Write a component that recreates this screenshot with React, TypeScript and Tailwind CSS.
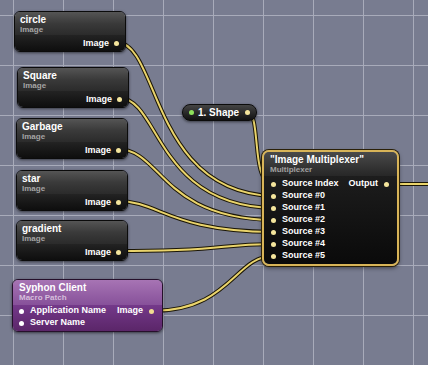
const wires = [
  // circle -> Source #0
  "M116 42 C160 42 150 192 273 196",
  // Square -> Source #1
  "M119 98 C160 98 155 205 273 208",
  // Garbage -> Source #2
  "M117 149 C162 149 160 218 273 220",
  // star -> Source #3
  "M117 201 C160 201 168 231 273 232",
  // gradient -> Source #4
  "M117 251 C230 251 215 244 273 244",
  // Syphon Client -> Source #5
  "M152 311 C230 311 235 256 273 256",
  // 1. Shape -> Source Index
  "M247 112 C262 112 250 184 273 184",
  // Output
  "M387 184 L440 184",
];

function Wires() {
  return (
    <svg className="absolute inset-0" width="428" height="365" viewBox="0 0 428 365">
      {wires.map((d, i) => (
        <g key={i} fill="none" strokeLinecap="round">
          <path d={d} stroke="#1b1606" strokeWidth="4" />
          <path d={d} stroke="#ead46c" strokeWidth="2" />
        </g>
      ))}
    </svg>
  );
}

function Dot({ color }: { color: string }) {
  return <span className={`block w-[5px] h-[5px] rounded-full shrink-0 ${color}`} />;
}

function ImageNode({ title, pos }: { title: string; pos: string }) {
  return (
    <div className={`absolute w-[112px] h-[41px] rounded-[6px] border border-[#0b0b0b] overflow-hidden shadow-[0_1px_3px_rgba(0,0,0,0.55)] ${pos}`}>
      <div className="h-[23px] px-[5px] pt-[2px] bg-linear-to-b from-[#555555] via-[#3a3a3a] to-[#2b2b2b]">
        <div className="text-[10px] leading-[11px] font-bold text-white">{title}</div>
        <div className="text-[8px] leading-[9px] font-bold text-[#a4a4a4]">Image</div>
      </div>
      <div className="h-[16px] flex items-center justify-end gap-[5px] pr-[6px] bg-linear-to-b from-[#232323] to-[#0e0e0e]">
        <span className="text-[9px] leading-[10px] font-bold text-white">Image</span>
        <Dot color="bg-[#f4e59c]" />
      </div>
    </div>
  );
}

const sources = ["Source #0", "Source #1", "Source #2", "Source #3", "Source #4", "Source #5"];

export default function App() {
  return (
    <div className="relative w-[428px] h-[365px] overflow-hidden bg-[#787c90] bg-[linear-gradient(to_right,#a8abba_1px,transparent_1px),linear-gradient(to_bottom,#a8abba_1px,transparent_1px)] bg-[size:50px_50px] bg-[position:13px_15px] font-['Liberation_Sans',Arial,sans-serif]">
      <Wires />

      <ImageNode title="circle" pos="left-[14px] top-[11px]" />
      <ImageNode title="Square" pos="left-[17px] top-[67px]" />
      <ImageNode title="Garbage" pos="left-[16px] top-[118px]" />
      <ImageNode title="star" pos="left-[16px] top-[170px]" />
      <ImageNode title="gradient" pos="left-[16px] top-[220px]" />

      {/* Syphon macro patch */}
      <div className="absolute left-[12px] top-[279px] w-[151px] h-[53px] rounded-[6px] border border-[#25102b] overflow-hidden shadow-[0_1px_3px_rgba(0,0,0,0.55)]">
        <div className="h-[25px] px-[6px] pt-[2px] bg-linear-to-b from-[#a774b4] to-[#87519a]">
          <div className="text-[10px] leading-[11px] font-bold text-white">Syphon Client</div>
          <div className="text-[8px] leading-[9px] font-bold text-[#d6bfdc]">Macro Patch</div>
        </div>
        <div className="h-[26px] flex flex-col pl-[6px] pr-[8px] bg-linear-to-b from-[#74398a] to-[#5b2669]">
          <div className="h-[12px] flex items-center gap-[6px]">
            <Dot color="bg-white" />
            <span className="text-[9px] font-bold text-white">Application Name</span>
            <span className="ml-auto text-[9px] font-bold text-white">Image</span>
            <Dot color="bg-[#f0dc90]" />
          </div>
          <div className="h-[12px] flex items-center gap-[6px]">
            <Dot color="bg-white" />
            <span className="text-[9px] font-bold text-white">Server Name</span>
          </div>
        </div>
      </div>

      {/* 1. Shape */}
      <div className="absolute left-[182px] top-[104px] w-[75px] h-[17px] rounded-[8px] border border-[#0b0b0b] flex items-center pl-[6px] pr-[6px] gap-[4px] bg-linear-to-b from-[#454545] to-[#121212] shadow-[0_1px_3px_rgba(0,0,0,0.55)]">
        <Dot color="bg-[#8ee25c]" />
        <span className="text-[10px] leading-[11px] font-bold text-white">1. Shape</span>
        <span className="ml-auto"><Dot color="bg-[#f4e59c]" /></span>
      </div>

      {/* Image Multiplexer */}
      <div className="absolute left-[262px] top-[150px] w-[137px] h-[116px] rounded-[7px] border-2 border-[#d8b458] overflow-hidden shadow-[0_0_0_1px_#2a2008,0_2px_4px_rgba(0,0,0,0.5)]">
        <div className="h-[24px] pl-[6px] pt-[2px] bg-linear-to-b from-[#4a4a4a] to-[#272727]">
          <div className="text-[10px] leading-[11px] font-bold text-white">"Image Multiplexer"</div>
          <div className="text-[8px] leading-[9px] font-bold text-[#a0a0a0]">Multiplexer</div>
        </div>
        <div className="h-[88px] pt-[2px] pl-[7px] pr-[8px] flex flex-col bg-linear-to-b from-[#1d1d1d] to-[#0a0a0a]">
          <div className="h-[12px] flex items-center gap-[6px]">
            <Dot color="bg-[#f4e59c]" />
            <span className="text-[9px] font-bold text-white">Source Index</span>
            <span className="ml-auto text-[9px] font-bold text-white">Output</span>
            <Dot color="bg-[#f4e59c]" />
          </div>
          {sources.map((s) => (
            <div key={s} className="h-[12px] flex items-center gap-[6px]">
              <Dot color="bg-[#f4e59c]" />
              <span className="text-[9px] font-bold text-white">{s}</span>
            </div>
          ))}
        </div>
      </div>
    </div>
  );
}
